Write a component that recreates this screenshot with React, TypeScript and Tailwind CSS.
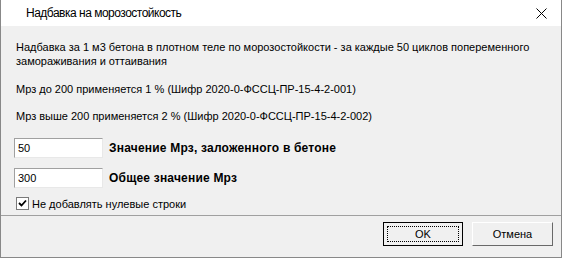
import React from "react"

const body = { fontFamily: '"Liberation Sans", Arial, sans-serif' }

function CloseIcon() {
  return (
    <svg width="11" height="11" viewBox="0 0 11 11" className="block">
      <path d="M0.5 0.5 L10.5 10.5 M10.5 0.5 L0.5 10.5" stroke="#000" strokeWidth="1" />
    </svg>
  )
}

function Field({ value, label }: { value: string; label: string }) {
  return (
    <div className="flex items-center h-[20px]">
      <div className="w-[89px] h-[20px] ml-[13px] bg-white border border-t-[#a0a0a0] border-l-[#a0a0a0] border-b-[#e8e8e8] border-r-[#e8e8e8] flex items-center pl-[3px] text-[11px]">
        {value}
      </div>
      <span className="ml-[6px] text-[12px] font-bold tracking-[0.2px]">{label}</span>
    </div>
  )
}

export default function App() {
  return (
    <div className="w-[562px] h-[258px] flex flex-col bg-[#f0f0f0] border-l border-r border-b border-[#888888] text-black overflow-hidden" style={body}>
      <div className="h-[26px] bg-white flex items-center justify-between pl-[25px] pr-[14px] shrink-0">
        <span className="text-[12px] tracking-[-0.5px]">Надбавка на морозостойкость</span>
        <CloseIcon />
      </div>

      <div className="flex-1 flex flex-col text-[11px] leading-[14px]">
        <p className="mt-[14px] pl-[15px] pr-[20px]">
          Надбавка за 1 м3 бетона в плотном теле по морозостойкости - за каждые 50 циклов попеременного замораживания и оттаивания
        </p>
        <p className="mt-[14px] pl-[15px]">Мрз до 200 применяется 1 % (Шифр 2020-0-ФССЦ-ПР-15-4-2-001)</p>
        <p className="mt-[13px] pl-[15px]">Мрз выше 200 применяется 2 % (Шифр 2020-0-ФССЦ-ПР-15-4-2-002)</p>

        <div className="mt-[15px] flex flex-col gap-[10px]">
          <Field value="50" label="Значение Мрз, заложенного в бетоне" />
          <Field value="300" label="Общее значение Мрз" />
        </div>

        <label className="mt-[9px] ml-[15px] flex items-center gap-[3px] h-[13px]">
          <span className="w-[13px] h-[13px] bg-white border border-[#7a7a7a] flex items-center justify-center">
            <svg width="9" height="9" viewBox="0 0 9 9">
              <path d="M1 4 L3.5 6.5 L8 1.5" stroke="#000" strokeWidth="1.8" fill="none" />
            </svg>
          </span>
          <span>Не добавлять нулевые строки</span>
        </label>

        <div className="mt-[5px] border-t border-[#a0a0a0]" />

        <div className="flex justify-end gap-[9px] pt-[6px] pr-[8px]">
          <button className="w-[80px] h-[24px] border border-black bg-[#f0f0f0] p-[3px]">
            <div className="w-full h-full border border-dotted border-black flex items-center justify-center">OK</div>
          </button>
          <button className="w-[81px] h-[24px] bg-[#f0f0f0] border border-t-white border-l-white border-b-[#696969] border-r-[#696969] flex items-center justify-center">
            Отмена
          </button>
        </div>
      </div>
    </div>
  )
}
